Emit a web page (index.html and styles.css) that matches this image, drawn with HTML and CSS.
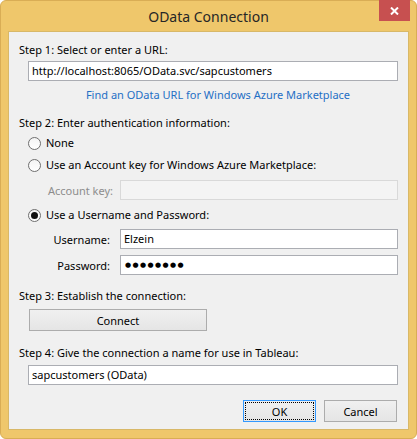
FILE: index.html
```html
<!DOCTYPE html>
<html>
<head>
<meta charset="utf-8">
<link rel="stylesheet" href="styles.css">
</head>
<body>
<div class="window">
  <div class="titlebar">
    <div class="title">OData Connection</div>
    <div class="close"><svg width="9" height="8" viewBox="0 0 9 8"><path d="M1 0.5 L8 7.5 M8 0.5 L1 7.5" stroke="#fff" stroke-width="2"/></svg></div>
  </div>
  <div class="client">
    <div class="label r-step1">Step 1: Select or enter a URL:</div>
    <div class="textbox indent r-url">http://localhost:8065/OData.svc/sapcustomers</div>
    <div class="link r-link">Find an OData URL for Windows Azure Marketplace</div>
    <div class="label r-step2">Step 2: Enter authentication information:</div>
    <div class="radio-row r-none"><span class="radio"></span><span>None</span></div>
    <div class="radio-row r-acct"><span class="radio"></span><span>Use an Account key for Windows Azure Marketplace:</span></div>
    <div class="field-row r-key"><span class="flabel disabled key">Account key:</span><div class="textbox dis grow"></div></div>
    <div class="radio-row r-user"><span class="radio checked"></span><span>Use a Username and Password:</span></div>
    <div class="field-row r-uname"><span class="flabel">Username:</span><div class="textbox grow">Elzein</div></div>
    <div class="field-row r-pass"><span class="flabel">Password:</span><div class="textbox grow dots">●●●●●●●●</div></div>
    <div class="label r-step3">Step 3: Establish the connection:</div>
    <div class="btn connect r-connect">Connect</div>
    <div class="label r-step4">Step 4: Give the connection a name for use in Tableau:</div>
    <div class="textbox indent r-name">sapcustomers (OData)</div>
    <div class="actions r-actions">
      <div class="btn ok"><span class="focus">OK</span></div>
      <div class="btn">Cancel</div>
    </div>
  </div>
</div>
</body>
</html>
```
FILE: styles.css
```css
html, body { margin: 0; padding: 0; background: #ffffff; }
body { font-family: "Noto Sans", "Open Sans", sans-serif; font-size: 11px; color: #000; }
.window {
  width: 417px; height: 439px; box-sizing: border-box;
  background: #efc76b; border: 1px solid #d9ad55; border-radius: 6px;
  display: flex; flex-direction: column;
}
.titlebar { height: 30px; position: relative; display: flex; align-items: center; justify-content: center; }
.title { font-size: 14px; color: #262626; margin-top: 1px; }
.close {
  position: absolute; right: 6px; top: -1px; width: 31px; height: 21px;
  background: #c75050; display: flex; align-items: center; justify-content: center;
}
.client {
  margin: 0 7px 0 7px; height: 399px; box-sizing: border-box;
  background: #f0f0f0; border: 1px solid #d8b868;
  padding: 10px 10px 0 10px; display: flex; flex-direction: column;
}
.label { height: 16px; line-height: 16px; white-space: nowrap; }
.indent { margin-left: 9px; }
.textbox {
  height: 20px; box-sizing: border-box; background: #fff; border: 1px solid #abadb3;
  line-height: 18px; padding-left: 3px; white-space: nowrap;
}
.textbox.dis { background: #f4f4f4; border-color: #d9d9d9; }
.grow { flex: 1; }
.link { height: 16px; line-height: 16px; color: #1f6fc5; text-align: center; margin-left: 19px; }
.radio-row { height: 16px; line-height: 16px; display: flex; align-items: center; margin-left: 9px; white-space: nowrap; }
.radio {
  width: 13px; height: 13px; box-sizing: border-box; border-radius: 50%;
  border: 1px solid #6f6f6f; background: linear-gradient(#f4f4f4, #ffffff);
  margin-right: 5px; display: flex; align-items: center; justify-content: center; flex: none;
}
.radio.checked::after { content: ""; width: 7px; height: 7px; border-radius: 50%; background: #111; }
.field-row { display: flex; align-items: center; margin-left: 9px; }
.flabel { width: 92px; flex: none; text-align: right; padding-right: 10px; box-sizing: border-box; }
.flabel.key { padding-right: 7px; }
.disabled { color: #8d8d8d; }
.dots { font-family: "DejaVu Sans", sans-serif; font-size: 7px; letter-spacing: 1.4px; padding-left: 4px; }
.btn {
  height: 22px; box-sizing: border-box; border: 1px solid #acacac;
  background: linear-gradient(#f0f0f0, #e5e5e5); display: flex; align-items: center; justify-content: center;
}
.connect { width: 178px; margin-left: 10px; }
.actions { display: flex; justify-content: flex-end; gap: 8px; padding-right: 1px; }
.actions .btn { width: 73px; }
.btn.ok { border-color: #3399ff; padding: 1px; }
.focus { flex: 1; align-self: stretch; border: 1px dotted #000; display: flex; align-items: center; justify-content: center; }
.r-url { margin-top: 3px; }
.r-link { margin-top: 6px; }
.r-step2 { margin-top: 12px; }
.r-none { margin-top: 4px; }
.r-acct { margin-top: 6px; }
.r-key { margin-top: 7px; }
.r-user { margin-top: 7px; }
.r-uname { margin-top: 6px; }
.r-pass { margin-top: 6px; }
.r-step3 { margin-top: 13px; }
.r-connect { margin-top: 5px; }
.r-step4 { margin-top: 14px; }
.r-name { margin-top: 4px; }
.r-actions { margin-top: 15px; }
```
